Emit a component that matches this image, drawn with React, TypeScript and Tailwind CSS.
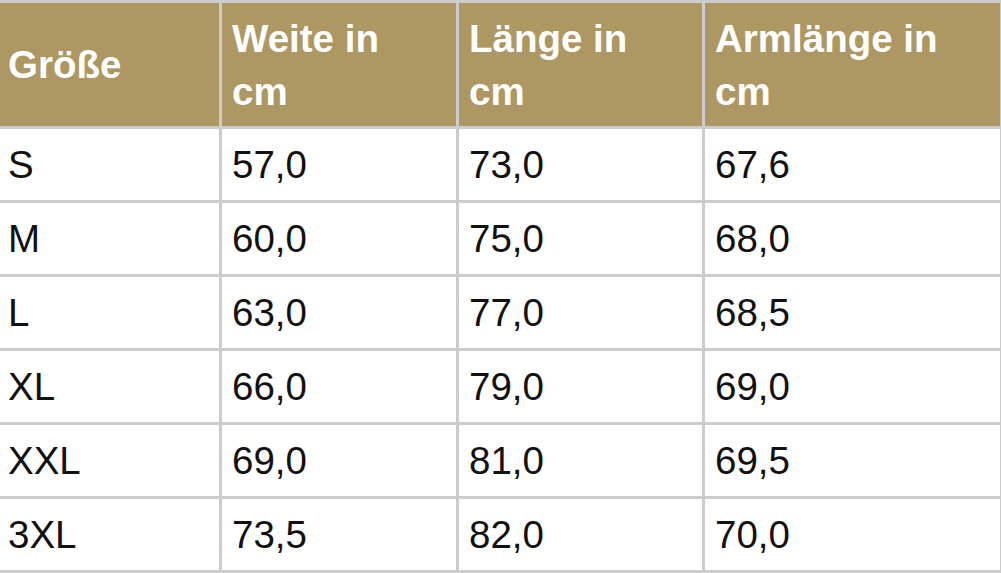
import React from 'react';

const rows: string[][] = [
  ['S', '57,0', '73,0', '67,6'],
  ['M', '60,0', '75,0', '68,0'],
  ['L', '63,0', '77,0', '68,5'],
  ['XL', '66,0', '79,0', '69,0'],
  ['XXL', '69,0', '81,0', '69,5'],
  ['3XL', '73,5', '82,0', '70,0'],
];

const headCell = "bg-[#ad9762] text-white font-bold flex items-center pr-[8px] h-[123px]";
const bodyCell = "bg-white text-[#111] pr-[9px] py-[9px]";

const App: React.FC = () => {
  return (
    <div className="w-[1001px] h-[573px] bg-white overflow-hidden font-['Liberation_Sans',Arial,sans-serif] text-[38.5px] leading-[53px]">
      <div className="grid grid-cols-[219px_234px_243px_1fr] gap-[3px] bg-[#cccccc] py-[3px] pr-px">
        <div className={`${headCell} pl-[8px]`}>Größe</div>
        <div className={`${headCell} pl-[10px]`}>
          <span>Weite in<br />cm</span>
        </div>
        <div className={`${headCell} pl-[10px]`}>
          <span>Länge in<br />cm</span>
        </div>
        <div className={`${headCell} pl-[10px]`}>
          <span>Armlänge in<br />cm</span>
        </div>
        {rows.map((row) =>
          row.map((cell, i) => (
            <div key={row[0] + i} className={`${bodyCell} ${i === 0 ? 'pl-[8px]' : 'pl-[10px]'}`}>
              {cell}
            </div>
          ))
        )}
      </div>
    </div>
  );
};

export default App;
